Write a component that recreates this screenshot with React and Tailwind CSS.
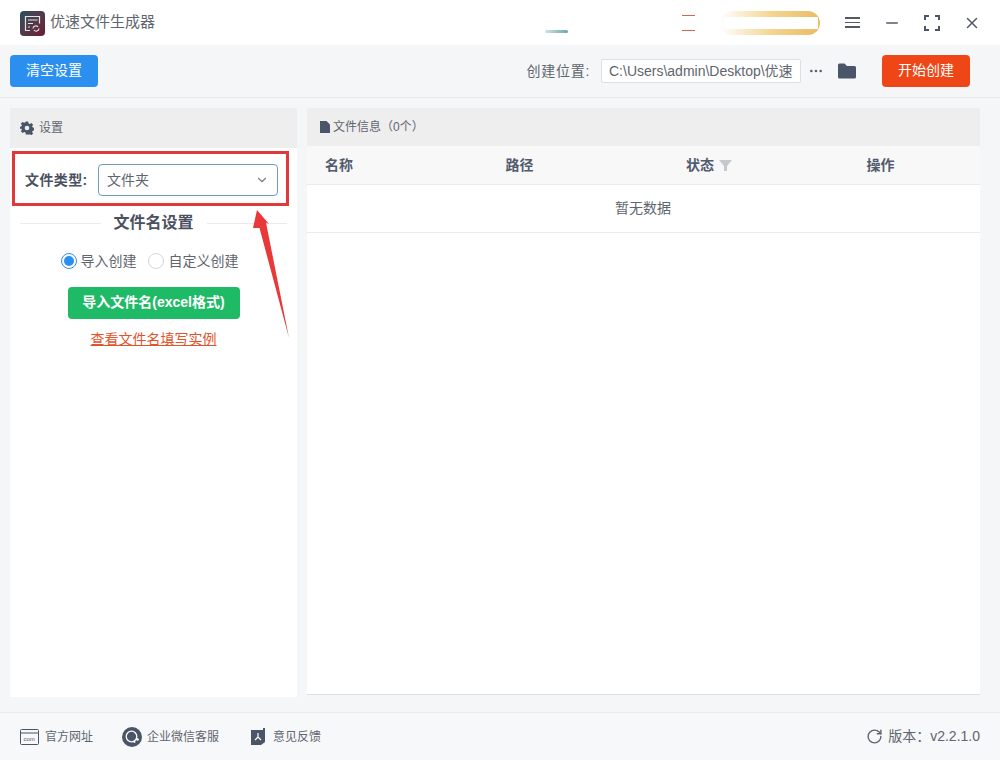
import React from 'react';
import { ChevronDown, Ellipsis, Minus, X, RotateCw } from 'lucide-react';

const font = { fontFamily: '"Liberation Sans", "Noto Sans CJK SC", sans-serif' };

function Logo() {
  return (
    <div className="mt-[2px] w-[25px] h-[25px] rounded-[4px] bg-gradient-to-br from-[#1c5060] to-[#6d1533] flex items-center justify-center">
      <svg width="19" height="19" viewBox="0 0 19 19" fill="none" stroke="#e4e4e4" strokeWidth="1.200">
        <path d="M7 16.500H2.500v-14h14v7" />
        <path d="M5 6h9.500M5 9.500h5M5 13h2" />
        <path d="M10 14.500a2.800 2.800 0 0 1 5-1.500M16 14.500a2.800 2.800 0 0 1-5 1.500" />
      </svg>
    </div>
  );
}

function Maximize() {
  return (
    <svg width="16" height="16" viewBox="0 0 16 16" fill="none" stroke="#4b5563" strokeWidth="2">
      <path d="M1 5V1h4M11 1h4v4M15 11v4h-4M5 15H1v-4" />
    </svg>
  );
}

function TitleBar() {
  return (
    <div className="h-[45px] bg-white flex items-center shrink-0">
      <div className="ml-[20px]"><Logo /></div>
      <span className="ml-[5px] text-[15px] text-[#60656e]">优速文件生成器</span>
      <div className="ml-[390px] w-[23px] h-[3px] mt-[17px] rounded-full bg-gradient-to-r from-[#cfe5e4] to-[#6ea7aa]" />
      <div className="ml-[114px] w-[13px] h-[16px] border-y border-[#c9694f]" />
      <div className="ml-[25px] w-[100px] h-[24px] rounded-full bg-gradient-to-r from-white via-[#f3d692] to-[#e9bd62] flex items-center justify-end pr-[2px]">
        <div className="w-[94px] h-[12px] bg-white" />
      </div>
      <div className="ml-[25px] w-[15px] h-[11px] border-y-2 border-[#555b66] flex items-center">
        <div className="w-full h-[1.500px] bg-[#555b66]" />
      </div>
      <Minus size={18} color="#555b66" className="ml-[23px]" />
      <div className="ml-[23px]"><Maximize /></div>
      <X size={18} color="#555b66" className="ml-[23px]" />
    </div>
  );
}

function ToolBar() {
  return (
    <div className="h-[53px] bg-[#f4f6f8] border-b border-[#e9ebee] flex items-center pl-[10px] pr-[30px] shrink-0">
      <button className="w-[88px] h-[32px] rounded-[4px] bg-[#2b8ff0] text-white text-[14px] mb-[1px]">清空设置</button>
      <span className="ml-auto text-[14px] text-[#60656e] tracking-[0.700px]">创建位置:</span>
      <div className="ml-[11px] w-[200px] h-[24px] bg-white border border-[#dcdfe6] rounded-[2px] text-[14px] text-[#60656e] pl-[7px] flex items-center overflow-hidden whitespace-nowrap">
        C:\Users\admin\Desktop\优速
      </div>
      <Ellipsis size={16} color="#5b6270" className="ml-[7px]" />
      <svg width="20" height="18" viewBox="0 0 20 18" className="ml-[13px]" fill="#4a5568">
        <path d="M1 3a1.500 1.500 0 0 1 1.500-1.500h5L10 4h7.500A1.500 1.500 0 0 1 19 5.500V15a1.500 1.500 0 0 1-1.500 1.500h-15A1.500 1.500 0 0 1 1 15z" />
      </svg>
      <button className="ml-[25px] w-[88px] h-[32px] rounded-[4px] bg-[#ee4616] text-white text-[14px] mb-[1px]">开始创建</button>
    </div>
  );
}

function SettingsPanel() {
  return (
    <div className="w-[287px] bg-white flex flex-col">
      <div className="h-[40px] bg-[#eeeeee] flex items-center pl-[10px] text-[12px] text-[#60656e]">
        <svg width="14" height="14" viewBox="0 0 24 24" fill="#4a5568">
          <path fillRule="evenodd" d="M10 1h4l.6 3.100 2.300 1 2.700-1.700 2.900 2.900-1.700 2.700 1 2.300 3.100.6v4l-3.100.6-1 2.300 1.700 2.700-2.900 2.900-2.700-1.700-2.300 1L14 23h-4l-.6-3.100-2.300-1-2.700 1.700-2.900-2.900 1.700-2.700-1-2.300L-.900 14v-4l3.100-.6 1-2.300L1.500 4.400l2.900-2.900 2.700 1.700 2.300-1zM12 8a4 4 0 1 0 0 8 4 4 0 0 0 0-8z" />
        </svg>
        <span className="ml-[5px]">设置</span>
      </div>
      <div className="flex items-center h-[32px] mt-[16px] pl-[15px]">
        <span className="text-[14px] font-bold text-[#4b5160] w-[73px] tracking-[0.400px]">文件类型:</span>
        <div className="w-[180px] h-[32px] border border-[#6f9dbd] rounded-[4px] flex items-center justify-between pl-[8px] pr-[8px] text-[14px] text-[#60656e]">
          文件夹
          <ChevronDown size={14} color="#7a808a" />
        </div>
      </div>
      <div className="flex items-center mt-[15px] px-[10px]">
        <div className="flex-1 h-px bg-[#e9ebee]" />
        <span className="px-[13px] text-[16px] font-bold text-[#4b5160]">文件名设置</span>
        <div className="flex-1 h-px bg-[#e9ebee]" />
      </div>
      <div className="flex items-center justify-center mt-[16px] pr-[8px] h-[20px] text-[14px] text-[#60656e]">
        <div className="w-[16px] h-[16px] rounded-full border border-[#2b8ff0] flex items-center justify-center">
          <div className="w-[10px] h-[10px] rounded-full bg-[#2b8ff0]" />
        </div>
        <span className="ml-[4px]">导入创建</span>
        <div className="ml-[11px] w-[16px] h-[16px] rounded-full border border-[#d4d7dd]" />
        <span className="ml-[5px]">自定义创建</span>
      </div>
      <button className="mt-[16px] mx-auto w-[172px] h-[32px] pb-[2px] rounded-[4px] bg-[#1fba66] text-white text-[14px] font-bold">
        导入文件名(excel格式)
      </button>
      <a className="mt-[10px] text-center text-[14px] text-[#e2532a] underline">查看文件名填写实例</a>
    </div>
  );
}

function FilePanel() {
  const cols = ['名称', '路径', '状态', '操作'];
  return (
    <div className="w-[673px] bg-white flex flex-col mb-[2px] border-b border-[#dcdfe6] overflow-hidden">
      <div className="h-[38px] bg-[#eeeeee] flex items-center pl-[13px] text-[12px] text-[#60656e]">
        <svg width="10" height="12" viewBox="0 0 10 12" fill="#4a5568"><path d="M0 0h6.500L10 3.500V12H0z" /></svg>
        <span className="ml-[3px]">文件信息（0个）</span>
      </div>
      <div className="h-[39px] bg-[#f8f8f9] border-b border-[#e8eaec] grid grid-cols-[repeat(4,180.500px)] text-[14px] font-bold text-[#515a6e]">
        {cols.map((c) => (
          <div key={c} className="flex items-center pl-[18px]">
            {c}
            {c === '状态' && (
              <svg width="13" height="11" viewBox="0 0 13 11" fill="#c5c8ce" className="ml-[5px]"><path d="M0 0h13L8 6v5H5V6z" /></svg>
            )}
          </div>
        ))}
      </div>
      <div className="h-[48px] pr-[1px] border-b border-[#e8eaec] flex items-center justify-center text-[14px] text-[#60656e]">暂无数据</div>
    </div>
  );
}

function Footer() {
  return (
    <div className="h-[48px] bg-[#f7f8fa] border-t border-[#e9ebee] flex items-center pl-[20px] pr-[20px] text-[12px] text-[#60656e] shrink-0">
      <svg width="19" height="16" viewBox="0 0 19 16" fill="none" stroke="#4a5568">
        <rect x="0.500" y="0.500" width="18" height="15" rx="1" />
        <path d="M1 4h17" />
        <text x="3.500" y="12" fontSize="6" fill="#4a5568" stroke="none">com</text>
      </svg>
      <span className="ml-[6px]">官方网址</span>
      <svg width="20" height="20" viewBox="0 0 20 20" className="ml-[29px]">
        <circle cx="10" cy="10" r="10" fill="#4a5568" />
        <circle cx="9.500" cy="9.500" r="5.300" fill="none" stroke="white" strokeWidth="1.300" />
        <circle cx="15.500" cy="12.500" r="1.300" fill="white" />
        <circle cx="12.500" cy="15" r="1" fill="white" />
      </svg>
      <span className="ml-[5px]">企业微信客服</span>
      <svg width="14" height="18" viewBox="0 0 14 18" className="ml-[32px]">
        <path d="M0 2h12v-2h2v14l-4 3H0z" fill="#4a5568" />
        <path d="M7 5v4M7 9l-3 3M7 9l3 3" stroke="white" strokeWidth="1.200" fill="none" />
      </svg>
      <span className="ml-[8px]">意见反馈</span>
      <RotateCw size={17} color="#60656e" className="ml-auto" />
      <span className="ml-[5px] text-[14px]">版本：v2.2.1.0</span>
    </div>
  );
}

export default function App() {
  return (
    <div className="relative w-[1000px] h-[760px] flex flex-col bg-[#f4f6f8] overflow-hidden" style={font}>
      <TitleBar />
      <ToolBar />
      <div className="flex-1 flex gap-[10px] pt-[10px] pb-[15px] px-[10px] min-h-0">
        <SettingsPanel />
        <FilePanel />
      </div>
      <Footer />
      {/* red annotation */}
      <div className="absolute left-[12px] top-[151px] w-[277px] h-[55px] border-[3px] border-[#e0393b]" />
      <svg className="absolute left-[250px] top-[208px]" width="42" height="132" viewBox="0 0 42 132">
        <path d="M7 2L19 16L16 14.500L39 130L9.500 20L3 20Z" fill="#e8383a" />
      </svg>
    </div>
  );
}
